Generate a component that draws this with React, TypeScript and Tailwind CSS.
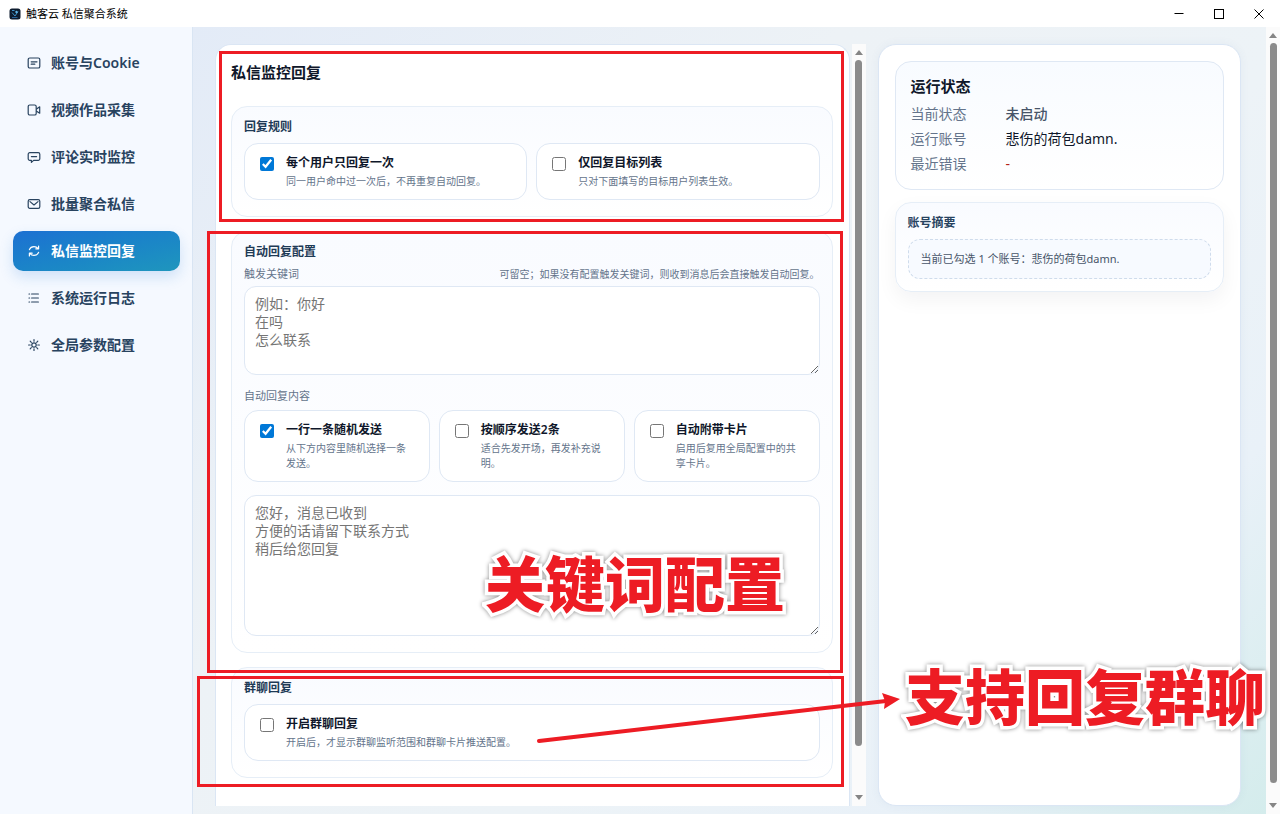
import React from "react";

const card = "rounded-2xl border border-[#e6eef7] bg-linear-to-b from-[#f9fbff] to-white";

const NavIcon = ({ children }: { children: React.ReactNode }) => (
  <svg
    viewBox="0 0 14 14"
    className="size-[14px] shrink-0"
    fill="none"
    stroke="currentColor"
    strokeWidth="1.2"
    strokeLinecap="round"
    strokeLinejoin="round"
    aria-hidden="true"
  >
    {children}
  </svg>
);

const navItems = [
  {
    label: "账号与Cookie",
    icon: (
      <>
        <rect x="1.2" y="2" width="11.6" height="10" rx="1.6" />
        <path d="M4.2 5.8h5.8M4.2 8.2h3.6" />
      </>
    ),
  },
  {
    label: "视频作品采集",
    icon: (
      <>
        <rect x="1.2" y="2" width="8" height="10" rx="1.6" />
        <path d="M9.600 6 12.700 3.800v6.400L9.600 8.200" />
      </>
    ),
  },
  {
    label: "评论实时监控",
    icon: (
      <>
        <path d="M2.800 2.600h8.400a1.600 1.600 0 0 1 1.600 1.600v4.600a1.600 1.600 0 0 1-1.600 1.600H6.600L4.400 12.400v-2H2.800a1.600 1.600 0 0 1-1.600-1.600V4.200A1.600 1.600 0 0 1 2.800 2.600Z" />
        <path d="M4.400 6.600h5.200" />
      </>
    ),
  },
  {
    label: "批量聚合私信",
    icon: (
      <>
        <rect x="1.200" y="2.600" width="11.600" height="8.800" rx="1.600" />
        <path d="m3 4.600 4 3.400 4-3.400" />
      </>
    ),
  },
  {
    label: "私信监控回复",
    active: true,
    icon: (
      <>
        <path d="M2.400 5.600C3.200 3.600 5 2.600 7 2.600c1.600 0 3 .6 4 1.800M11.600 2v2.800H8.800" />
        <path d="M11.600 8.400c-.8 2-2.600 3-4.600 3-1.600 0-3-.6-4-1.800M2.400 12V9.200h2.800" />
      </>
    ),
  },
  {
    label: "系统运行日志",
    icon: <path d="M4.600 3h6.800M4.600 7h6.800M4.600 11h6.800M2 3h.6M2 7h.6M2 11h.6" />,
  },
  {
    label: "全局参数配置",
    icon: (
      <>
        <circle cx="7" cy="7" r="2.200" />
        <path d="M7 1.600v1.600M7 10.800v1.600M1.600 7h1.600M10.800 7h1.600M3.200 3.200l1.100 1.100M9.700 9.700l1.100 1.100M3.200 10.800l1.100-1.100M9.700 4.300l1.100-1.100" />
      </>
    ),
  },
];

const TitleBar = () => {
  return (
    <header className="flex h-[27px] shrink-0 items-center justify-between bg-white pl-[9px] pr-px">
      <div className="flex items-center gap-[5px]">
        <svg viewBox="0 0 12 12" className="size-3" aria-hidden="true">
          <rect x="0.500" y="0.500" width="11" height="11" rx="2.500" fill="#0d1b2e" />
          <path d="M3 2.500h2.500M3 4.500l3 3.500 3-4.500" stroke="#3d8fc4" strokeWidth="1" fill="none" />
          <circle cx="7.500" cy="4" r="1.200" fill="#5fb7e8" />
          <path d="M3 9.500h5.500" stroke="#255f96" strokeWidth="1" />
        </svg>
        <span className="text-[11px] leading-4 text-black">触客云 私信聚合系统</span>
      </div>
      <div className="flex text-black">
        <button aria-label="最小化" className="flex h-[27px] w-10 items-center justify-center">
          <svg viewBox="0 0 10 10" className="size-2.5" stroke="currentColor" fill="none">
            <path d="M0.500 4.500h9" />
          </svg>
        </button>
        <button aria-label="最大化" className="flex h-[27px] w-10 items-center justify-center">
          <svg viewBox="0 0 10 10" className="size-2.5" stroke="currentColor" fill="none">
            <rect x="0.500" y="0.500" width="9" height="9" />
          </svg>
        </button>
        <button aria-label="关闭" className="flex h-[27px] w-10 items-center justify-center">
          <svg viewBox="0 0 10 10" className="size-2.5" stroke="currentColor" fill="none">
            <path d="m0.500 0.500 9 9M9.500 0.500l-9 9" />
          </svg>
        </button>
      </div>
    </header>
  );
};

const Sidebar = () => {
  return (
    <nav className="flex w-[193px] shrink-0 flex-col gap-[7px] border-r border-[#d9e5f3] bg-[#f5f9ff] pt-4 pr-3 pl-[13px]">
      {navItems.map((item) => (
        <button
          key={item.label}
          className={
            item.active
              ? "flex h-10 shrink-0 items-center gap-2.5 rounded-[10px] bg-linear-to-br from-[#1d70d2] to-[#1f96bd] px-3.5 text-white shadow-[0_6px_14px_rgba(31,114,208,0.18)]"
              : "flex h-10 shrink-0 items-center gap-2.5 rounded-[10px] px-3.5 text-[#28435f]"
          }
        >
          <NavIcon>{item.icon}</NavIcon>
          <span className="text-sm font-semibold">{item.label}</span>
        </button>
      ))}
    </nav>
  );
};

const ScrollTrack = ({ thumb }: { thumb: string }) => (
  <div className="flex w-[14px] shrink-0 flex-col items-center bg-[#fbfbfb] py-1.5" aria-hidden="true">
    <svg viewBox="0 0 8 5" className="h-[5px] w-2 shrink-0" fill="#858585">
      <path d="M4 0 8 5H0Z" />
    </svg>
    <div className="min-h-0 flex-1 py-[5px]">
      <div className={`w-[7px] rounded-full bg-[#8b8b8b] ${thumb}`}></div>
    </div>
    <svg viewBox="0 0 8 5" className="h-[5px] w-2 shrink-0" fill="#858585">
      <path d="M4 5 0 0h8Z" />
    </svg>
  </div>
);

type OptionProps = { title: string; desc: string; checked?: boolean };

const Option = ({ title, desc, checked }: OptionProps) => (
  <label className="flex items-start gap-3 rounded-[14px] border border-[#dfe8f4] bg-white px-[15px] py-2.5">
    <input
      type="checkbox"
      defaultChecked={checked}
      className="mt-[3px] size-[14px] shrink-0 accent-[#0078d7]"
    />
    <span className="min-w-0">
      <span className="block text-xs leading-[17px] font-semibold text-[#0f172a]">{title}</span>
      <span className="mt-[3px] block text-[10px] leading-[15px] text-[#64748b]">{desc}</span>
    </span>
  </label>
);

const Section = ({ title, children }: { title: string; children: React.ReactNode }) => (
  <section className={`${card} px-3 pt-3 pb-4`}>
    <h3 className="text-xs leading-4 font-semibold text-[#1e3a56]">{title}</h3>
    {children}
  </section>
);

const textarea =
  "block w-full rounded-[12px] border border-[#dfe8f4] bg-white px-2.5 py-2 text-sm leading-[18px] text-[#0f172a] placeholder:text-[#757575]";

const ReplyPanel = () => {
  return (
    <div className="flex min-h-0 min-w-0 overflow-hidden">
      <div className="mr-0.5 min-w-0 flex-1 rounded-t-2xl border border-b-0 border-[#dbe6f4] bg-white pr-4 pl-[15px]">
        <h2 className="mt-[17px] text-[15px] leading-5 font-semibold text-[#0f172a]">私信监控回复</h2>

        <div className="mt-6 flex flex-col gap-[14px]">
          <Section title="回复规则">
            <div className="mt-2 grid grid-cols-2 gap-[9px]">
              <Option title="每个用户只回复一次" desc="同一用户命中过一次后，不再重复自动回复。" checked />
              <Option title="仅回复目标列表" desc="只对下面填写的目标用户列表生效。" />
            </div>
          </Section>

          <Section title="自动回复配置">
            <div className="mt-1.5 flex items-center justify-between leading-4 text-[#64748b]">
              <label htmlFor="keywords" className="text-[11px]">
                触发关键词
              </label>
              <span className="text-[10px]">
                可留空；如果没有配置触发关键词，则收到消息后会直接触发自动回复。
              </span>
            </div>
            <textarea
              id="keywords"
              className={`${textarea} mt-1 h-[89px]`}
              placeholder={"例如：你好\n在吗\n怎么联系"}
            />

            <label htmlFor="replies" className="mt-[13px] block text-[11px] leading-4 text-[#64748b]">
              自动回复内容
            </label>
            <div className="mt-1.5 grid grid-cols-3 gap-[9px]">
              <Option title="一行一条随机发送" desc="从下方内容里随机选择一条发送。" checked />
              <Option title="按顺序发送2条" desc="适合先发开场，再发补充说明。" />
              <Option title="自动附带卡片" desc="启用后复用全局配置中的共享卡片。" />
            </div>
            <textarea
              id="replies"
              className={`${textarea} mt-[13px] h-[141px]`}
              placeholder={"您好，消息已收到\n方便的话请留下联系方式\n稍后给您回复"}
            />
          </Section>

          <Section title="群聊回复">
            <div className="mt-2">
              <Option title="开启群聊回复" desc="开启后，才显示群聊监听范围和群聊卡片推送配置。" />
            </div>
          </Section>
        </div>
      </div>
      <ScrollTrack thumb="h-[94%]" />
    </div>
  );
};

const StatusPanel = () => {
  return (
    <aside className="flex min-w-0 flex-col gap-3 rounded-[18px] border border-[#dbe6f4] bg-white p-4 shadow-[0_0_10px_rgba(60,100,160,0.06)]">
      <section className="rounded-2xl border border-[#dfe8f4] bg-linear-to-b from-[#f8fbff] to-white px-[15px] pt-[15px] pb-4">
        <h2 className="text-[15px] leading-[18px] font-semibold text-[#0f172a]">运行状态</h2>
        <dl className="mt-2.5 grid grid-cols-[95px_1fr] gap-y-[7px] text-sm leading-[18px]">
          <dt className="text-[#64748b]">当前状态</dt>
          <dd className="font-medium text-[#475569]">未启动</dd>
          <dt className="text-[#64748b]">运行账号</dt>
          <dd className="text-[#0f172a]">悲伤的荷包damn.</dd>
          <dt className="text-[#64748b]">最近错误</dt>
          <dd className="text-[#b42318]">-</dd>
        </dl>
      </section>

      <section className={`${card} p-3 shadow-[0_8px_20px_rgba(15,23,42,0.05)]`}>
        <h3 className="text-xs leading-4 font-semibold text-[#28435f]">账号摘要</h3>
        <p className="mt-2 rounded-[12px] border border-dashed border-[#cfdcec] bg-[#f7faff] px-3 py-[10px] text-[11px] leading-[18px] text-[#475569]">
          当前已勾选 1 个账号：悲伤的荷包damn.
        </p>
      </section>
    </aside>
  );
};

const callout =
  "absolute text-[60px] leading-[60px] font-black whitespace-nowrap text-[#ed1c24] [paint-order:stroke] [-webkit-text-stroke:7px_white] drop-shadow-[0_0_2px_rgba(0,0,0,0.45)]";

const frame = "absolute border-[3px] border-[#ed1c24]";

/* Red marks drawn over the window */
const Annotations = () => {
  return (
    <div className="pointer-events-none absolute inset-0 overflow-hidden">
      <div className={`${frame} top-[51px] left-[219px] h-[171px] w-[625px]`}></div>
      <div className={`${frame} top-[231px] left-[207px] h-[442px] w-[636px]`}></div>
      <div className={`${frame} top-[676px] left-[197px] h-[111px] w-[647px]`}></div>
      <svg
        viewBox="0 0 370 56"
        className="absolute top-[690px] left-[534px] h-14 w-[370px]"
        aria-hidden="true"
      >
        <path d="M5 51 352 11" stroke="#ed1c24" strokeWidth="4" strokeLinecap="round" />
        <path d="m366 9-18-6 3 8-1 8Z" fill="#ed1c24" />
      </svg>
      <p className={`${callout} top-[554px] left-[485px]`}>关键词配置</p>
      <p className={`${callout} top-[667px] left-[905px]`}>支持回复群聊</p>
    </div>
  );
};

const App = () => {
  return (
    <div className="relative flex h-screen flex-col overflow-hidden bg-white font-['Noto_Sans','Noto_Sans_CJK_SC',sans-serif]">
      <TitleBar />
      <div className="flex min-h-0 flex-1">
        <Sidebar />
        <main className="grid min-w-0 flex-1 grid-cols-[minmax(0,1.79fr)_minmax(0,1fr)] grid-rows-[minmax(0,1fr)] gap-3 bg-linear-[135deg,#e3ebf7_0%,#edf2f6_35%,#edf3f7_60%,#e9f1f8_80%,#d4ecec_100%] pt-[17px] pr-[25px] pb-2 pl-[22px]">
          <ReplyPanel />
          <StatusPanel />
        </main>
        <ScrollTrack thumb="h-[98%]" />
      </div>
      <Annotations />
    </div>
  );
};

export default App;
